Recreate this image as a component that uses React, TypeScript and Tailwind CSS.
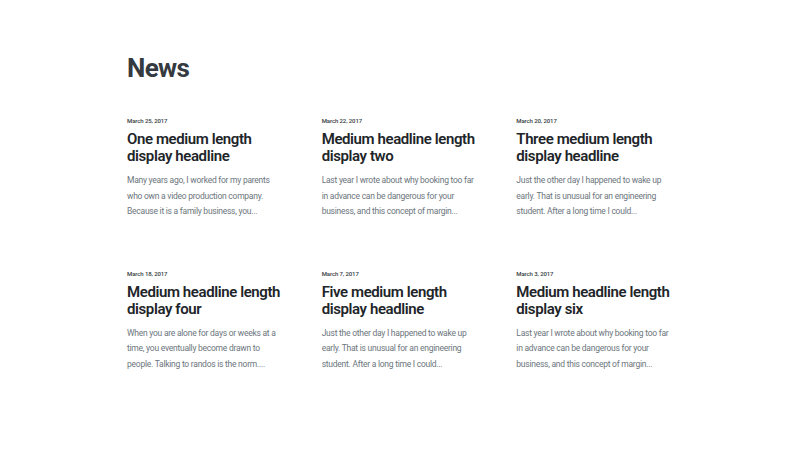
const posts = [
  {
    date: 'March 25, 2017',
    title: 'One medium length display headline',
    body: 'Many years ago, I worked for my parents who own a video production company. Because it is a family business, you...',
  },
  {
    date: 'March 22, 2017',
    title: 'Medium headline length display two',
    body: 'Last year I wrote about why booking too far in advance can be dangerous for your business, and this concept of margin...',
  },
  {
    date: 'March 20, 2017',
    title: 'Three medium length display headline',
    body: 'Just the other day I happened to wake up early. That is unusual for an engineering student. After a long time I could...',
  },
  {
    date: 'March 18, 2017',
    title: 'Medium headline length display four',
    body: 'When you are alone for days or weeks at a time, you eventually become drawn to people. Talking to randos is the norm....',
  },
  {
    date: 'March 7, 2017',
    title: 'Five medium length display headline',
    body: 'Just the other day I happened to wake up early. That is unusual for an engineering student. After a long time I could...',
  },
  {
    date: 'March 3, 2017',
    title: 'Medium headline length display six',
    body: 'Last year I wrote about why booking too far in advance can be dangerous for your business, and this concept of margin...',
  },
];

export default function App() {
  return (
    <div className="w-[800px] h-[452px] bg-white font-['Roboto',sans-serif] overflow-hidden">
      <div className="ml-[127px] w-[545px] pt-[50px]">
        <h1 className="text-[26px] leading-[36px] font-bold text-[#343a40] tracking-[-0.7px]">News</h1>

        <div className="mt-[31px] grid grid-cols-3 gap-x-[39px] gap-y-[50px]">
          {posts.map((p) => (
            <article key={p.date}>
              <p className="text-[6px] leading-[8px] font-medium text-[#343a40] tracking-[-0.1px]">{p.date}</p>
              <h2 className="mt-[6px] text-[15px] leading-[17px] font-semibold text-[#212529] tracking-[-0.4px]">
                {p.title}
              </h2>
              <p className="mt-[8px] text-[8.5px] leading-[15.5px] text-[#6c757d] tracking-[-0.25px]">{p.body}</p>
            </article>
          ))}
        </div>
      </div>
    </div>
  );
}
